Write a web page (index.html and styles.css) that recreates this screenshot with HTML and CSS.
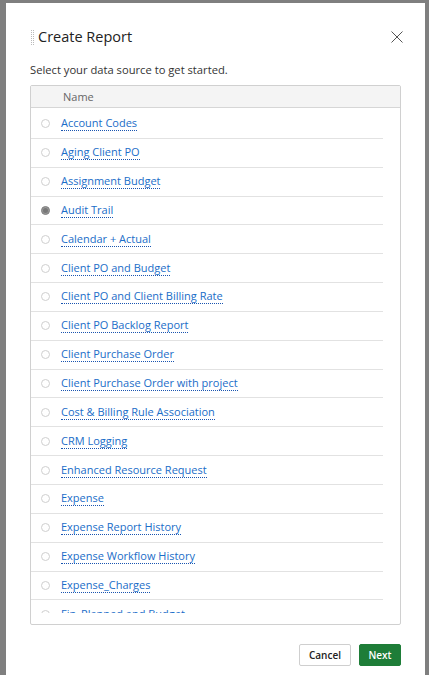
FILE: index.html
```html
<!DOCTYPE html>
<html>
<head>
<meta charset="utf-8">
<link rel="stylesheet" href="styles.css">
</head>
<body>
<div class="modal">
  <div class="modal-head">
    <span class="grip"></span>
    <h1 class="title">Create Report</h1>
    <svg class="close" width="12" height="12" viewBox="0 0 12 12"><path d="M0.5 0.5 L11.5 11.5 M11.5 0.5 L0.5 11.5" stroke="#555" stroke-width="1" fill="none"/></svg>
  </div>
  <p class="subtitle">Select your data source to get started.</p>
  <div class="grid">
    <div class="grid-head">Name</div>
    <div class="grid-body">
      <div class="scrollthumb"></div>
      <div class="row"><span class="radio"></span><a class="link">Account Codes</a></div>
      <div class="row"><span class="radio"></span><a class="link">Aging Client PO</a></div>
      <div class="row"><span class="radio"></span><a class="link">Assignment Budget</a></div>
      <div class="row"><span class="radio checked"></span><a class="link">Audit Trail</a></div>
      <div class="row"><span class="radio"></span><a class="link">Calendar + Actual</a></div>
      <div class="row"><span class="radio"></span><a class="link">Client PO and Budget</a></div>
      <div class="row"><span class="radio"></span><a class="link">Client PO and Client Billing Rate</a></div>
      <div class="row"><span class="radio"></span><a class="link">Client PO Backlog Report</a></div>
      <div class="row"><span class="radio"></span><a class="link">Client Purchase Order</a></div>
      <div class="row"><span class="radio"></span><a class="link">Client Purchase Order with project</a></div>
      <div class="row"><span class="radio"></span><a class="link">Cost &amp; Billing Rule Association</a></div>
      <div class="row"><span class="radio"></span><a class="link">CRM Logging</a></div>
      <div class="row"><span class="radio"></span><a class="link">Enhanced Resource Request</a></div>
      <div class="row"><span class="radio"></span><a class="link">Expense</a></div>
      <div class="row"><span class="radio"></span><a class="link">Expense Report History</a></div>
      <div class="row"><span class="radio"></span><a class="link">Expense Workflow History</a></div>
      <div class="row"><span class="radio"></span><a class="link">Expense_Charges</a></div>
      <div class="row"><span class="radio"></span><a class="link">Fin_Planned and Budget</a></div>
    </div>
  </div>
  <div class="footer">
    <button class="btn btn-cancel">Cancel</button>
    <button class="btn btn-next">Next</button>
  </div>
</div>
</body>
</html>
```
FILE: styles.css
```css
html, body {
  margin: 0;
  padding: 0;
  height: 100%;
  overflow: hidden;
}
body {
  background: #7f7f7f;
  font-family: "Open Sans", "Liberation Sans", sans-serif;
  color: #333;
}
.modal {
  margin: 3px 0 0 6px;
  width: 419px;
  height: 700px;
  background: #fff;
  box-sizing: border-box;
  padding: 24px 24px 0 24px;
}
.modal-head {
  display: flex;
  align-items: center;
  height: 20px;
}
.grip {
  margin-left: 1px;
  width: 3px;
  height: 15px;
  border-left: 1px dotted #bbb;
  border-right: 1px dotted #bbb;
  box-sizing: border-box;
}
.title {
  margin: -1px 0 0 4px;
  font-size: 14.5px;
  font-weight: 400;
  color: #222;
  flex: 1;
  line-height: 20px;
}
.close {
  margin-right: -2px;
  margin-top: -1px;
}
.subtitle {
  margin: 15px 0 0 0;
  font-size: 11.2px;
  line-height: 15px;
  color: #333;
}
.grid {
  margin-top: 8px;
  border: 1px solid #d0d0d0;
  border-radius: 2px;
  height: 540px;
  box-sizing: border-box;
  display: flex;
  flex-direction: column;
}
.grid-head {
  background: #f4f4f4;
  border-bottom: 1px solid #d6d6d6;
  height: 21px;
  line-height: 21px;
  font-size: 11px;
  color: #666;
  padding-left: 32px;
  flex: none;
}
.grid-body {
  height: 505px;
  overflow: hidden;
  margin-right: 17px;
  padding-top: 2px;
  box-sizing: border-box;
  position: relative;
  flex: none;
}
.scrollthumb {
  position: absolute;
  right: -11px;
  top: 6px;
  width: 6px;
  height: 60px;
  background: #f8f8f8;
}
.row {
  height: 28.85px;
  box-sizing: border-box;
  border-bottom: 1px solid #e2e2e2;
  display: flex;
  align-items: center;
  padding-left: 10px;
}
.radio {
  width: 9px;
  height: 9px;
  border: 1px solid #cfcfcf;
  border-radius: 50%;
  box-sizing: border-box;
  margin-right: 11px;
  background: #fff;
}
.radio.checked {
  border-color: #888;
  background: #777;
  box-shadow: inset 0 0 0 1px #999;
}
.link {
  font-size: 11px;
  color: #1a6dc8;
  text-decoration: none;
  border-bottom: 1px dotted #1a55b0;
  line-height: 14px;
}
.footer {
  display: flex;
  justify-content: flex-end;
  gap: 8px;
  margin-top: 19px;
}
.btn {
  height: 22px;
  font-family: "Open Sans", "Liberation Sans", sans-serif;
  font-size: 10px;
  font-weight: 600;
  border-radius: 2px;
  padding: 0;
  cursor: pointer;
}
.btn-cancel {
  background: #fff;
  border: 1px solid #cfcfcf;
  color: #222;
  width: 52px;
}
.btn-next {
  background: #1e7d38;
  border: 1px solid #1e7d38;
  color: #fff;
  width: 42px;
}
```
